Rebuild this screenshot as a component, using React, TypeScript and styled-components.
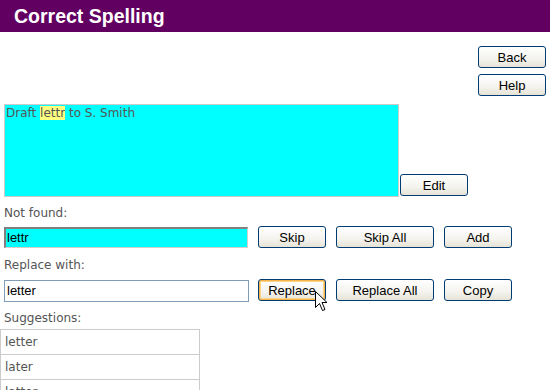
import React from 'react';
import styled, { createGlobalStyle } from 'styled-components';

const GlobalStyle = createGlobalStyle`
  html, body {
    margin: 0;
    padding: 0;
    background: #fff;
  }
  body {
    font-family: "DejaVu Sans", Verdana, sans-serif;
    width: 550px;
    height: 390px;
    overflow: hidden;
  }
`;

const Page = styled.div`
  width: 550px;
  height: 390px;
  position: relative;
  overflow: hidden;
`;

const Header = styled.div`
  height: 32px;
  background: #620062;
  color: #fff;
  font-family: "Liberation Sans", Arial, sans-serif;
  font-weight: bold;
  font-size: 19.5px;
  line-height: 32px;
  padding-left: 14px;
`;

const NavColumn = styled.div`
  display: flex;
  flex-direction: column;
  align-items: flex-end;
  gap: 6px;
  padding: 14px 4px 0 0;
`;

const Button = styled.button<{ $width?: number; $focused?: boolean }>`
  width: ${(p) => p.$width ?? 68}px;
  height: 22px;
  padding: 0;
  border: 1px solid #003c74;
  border-radius: 3px;
  background: linear-gradient(#ffffff 0%, #f4f3ee 60%, #e6e3d6 100%);
  box-shadow: ${(p) =>
    p.$focused ? 'inset 0 0 0 1px #f9b34c, inset 0 0 0 2px #fcd48a' : 'none'};
  font-family: "Liberation Sans", Tahoma, Arial, sans-serif;
  font-size: 13px;
  color: #000;
  cursor: default;
`;

const DraftRow = styled.div`
  display: flex;
  align-items: flex-end;
  gap: 1px;
  padding: 8px 0 0 4px;
`;

const DraftBox = styled.div`
  width: 393px;
  height: 91px;
  border: 1px solid #cccccc;
  background: #00ffff;
  color: #555;
  font-size: 12px;
  line-height: 17px;
  text-indent: 1px;
`;

const Highlight = styled.span`
  background: #ffff80;
`;

const EditButton = styled(Button)`
  margin-bottom: 1px;
`;

const Label = styled.div<{ $top: number }>`
  color: #555;
  font-size: 12px;
  line-height: 16px;
  padding: ${(p) => p.$top}px 0 0 4px;
`;

const FieldRow = styled.div<{ $top: number }>`
  display: flex;
  align-items: flex-start;
  padding: ${(p) => p.$top}px 0 0 4px;
`;

const ButtonGroup = styled.div`
  display: flex;
  gap: 10px;
`;

const Input = styled.div<{ $found?: boolean }>`
  box-sizing: border-box;
  width: ${(p) => (p.$found ? 244 : 245)}px;
  height: ${(p) => (p.$found ? 21 : 22)}px;
  margin: 1px ${(p) => (p.$found ? 10 : 9)}px 0 0;
  background: ${(p) => (p.$found ? '#00ffff' : '#fff')};
  border: 1px solid ${(p) => (p.$found ? '#d4d0c8' : '#7f9db9')};
  border-top: ${(p) => (p.$found ? '2px solid #808080' : '1px solid #7f9db9')};
  border-left: ${(p) => (p.$found ? '2px solid #808080' : '1px solid #7f9db9')};
  font-family: "Liberation Sans", Arial, sans-serif;
  font-size: 13px;
  color: #000;
  padding-left: ${(p) => (p.$found ? 1 : 2)}px;
  line-height: ${(p) => (p.$found ? 18 : 20)}px;
`;

const ButtonWrap = styled.div`
  position: relative;
  display: flex;
`;

const Cursor = styled.svg`
  position: absolute;
  left: 57px;
  top: 12px;
  pointer-events: none;
`;

const SuggestionList = styled.div`
  margin-top: 3px;
  width: 200px;
  border: 1px solid #cccccc;
  border-bottom: none;
  box-sizing: border-box;
`;

const Suggestion = styled.div`
  height: 24px;
  border-bottom: 1px solid #cccccc;
  color: #555;
  font-size: 12px;
  line-height: 24px;
  padding-left: 4px;
`;

const suggestions = ['letter', 'later', 'latter'];

export default function App() {
  return (
    <Page>
      <GlobalStyle />
      <Header>Correct Spelling</Header>
      <NavColumn>
        <Button>Back</Button>
        <Button>Help</Button>
      </NavColumn>
      <DraftRow>
        <DraftBox>
          Draft <Highlight>lettr</Highlight> to S. Smith
        </DraftBox>
        <EditButton>Edit</EditButton>
      </DraftRow>
      <Label $top={8}>Not found:</Label>
      <FieldRow $top={5}>
        <Input $found>lettr</Input>
        <ButtonGroup>
          <Button>Skip</Button>
          <Button $width={98}>Skip All</Button>
          <Button>Add</Button>
        </ButtonGroup>
      </FieldRow>
      <Label $top={9}>Replace with:</Label>
      <FieldRow $top={6}>
        <Input>letter</Input>
        <ButtonGroup>
          <ButtonWrap>
            <Button $focused>Replace</Button>
            <Cursor width="13" height="21" viewBox="0 0 13 21">
              <path
                d="M0.5 0.5 L0.5 16.5 L4.5 12.5 L7.5 19.5 L10 18.5 L7 11.5 L12 11.5 Z"
                fill="#fff"
                stroke="#000"
                strokeWidth="1"
              />
            </Cursor>
          </ButtonWrap>
          <Button $width={98}>Replace All</Button>
          <Button>Copy</Button>
        </ButtonGroup>
      </FieldRow>
      <Label $top={8}>Suggestions:</Label>
      <SuggestionList>
        {suggestions.map((s) => (
          <Suggestion key={s}>{s}</Suggestion>
        ))}
      </SuggestionList>
    </Page>
  );
}
